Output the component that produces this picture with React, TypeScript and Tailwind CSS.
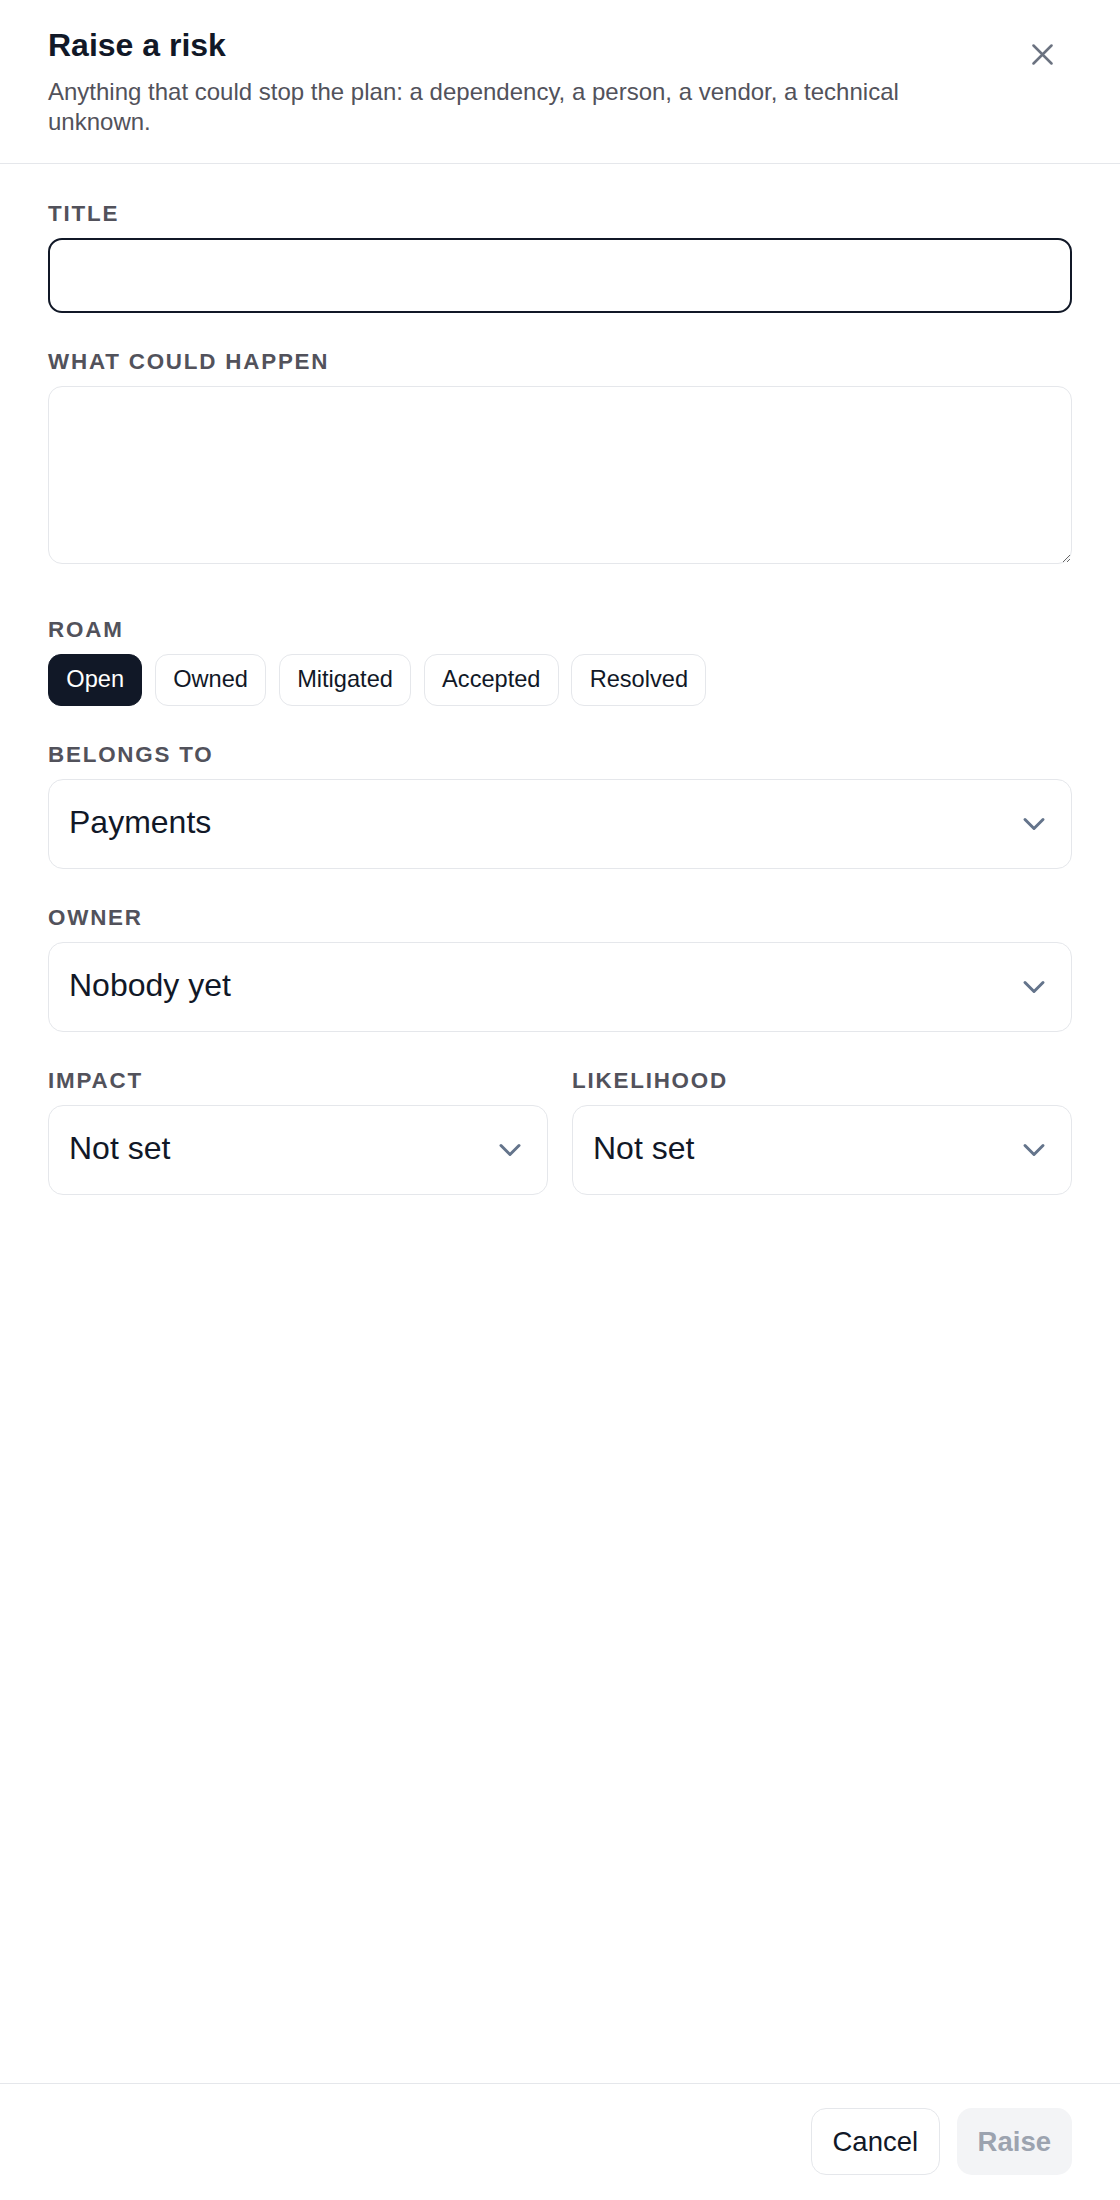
import React from "react";

function Label({ children }: { children: React.ReactNode }) {
  return (
    <div className="mb-[10px] text-[22.4px] font-bold uppercase leading-[28px] tracking-[0.08em] text-[#52525b]">
      {children}
    </div>
  );
}

function Chevron() {
  return (
    <svg width="36" height="36" viewBox="0 0 24 24" fill="none" stroke="#64748b" strokeWidth="2" strokeLinecap="round" strokeLinejoin="round">
      <path d="m6 9 6 6 6-6" />
    </svg>
  );
}

function SelectBox({ value }: { value: string }) {
  return (
    <button
      type="button"
      className="flex h-[90px] w-full items-center justify-between rounded-[15px] border-[1.5px] border-[#e5e7eb] bg-white pl-[20px] pr-[19px] text-left"
    >
      <span className="mb-[5px] text-[32px] leading-[36px] text-[#111827]">{value}</span>
      <Chevron />
    </button>
  );
}

export default function App() {
  const pills = ["Open", "Owned", "Mitigated", "Accepted", "Resolved"];
  return (
    <div className="flex min-h-screen flex-col bg-white" style={{ fontFamily: '"Liberation Sans", Arial, sans-serif' }}>
      <header className="flex items-start justify-between border-b-[1.5px] border-[#e5e7eb] px-12 pb-[26px] pt-[25px]">
        <div className="max-w-[900px]">
          <h1 className="text-[32px] font-bold leading-[40px] text-[#111827]">Raise a risk</h1>
          <p className="mt-[12px] text-[24px] leading-[30px] text-[#52525b]">
            Anything that could stop the plan: a dependency, a person, a vendor, a technical unknown.
          </p>
        </div>
        <button type="button" aria-label="Close" className="mr-[7.5px] mt-[7px] flex h-[44px] w-[44px] items-center justify-center">
          <svg width="21" height="21" viewBox="0 0 21 21" fill="none" stroke="#6b7280" strokeWidth="2.5" strokeLinecap="round">
            <path d="M1.5 1.5 19.5 19.5M19.5 1.5 1.5 19.5" />
          </svg>
        </button>
      </header>

      <main className="flex-1 px-12 pt-[36px]">
        <section>
          <Label>Title</Label>
          <input
            type="text"
            className="block h-[75px] w-full rounded-[14px] border-[2.4px] border-[#111827] bg-white px-5 text-[32px] text-[#111827] outline-none"
          />
        </section>

        <section className="mt-[35px]">
          <Label>What could happen</Label>
          <textarea className="block h-[178px] w-full resize-y rounded-[14px] border-[1.5px] border-[#e5e7eb] bg-white px-5 py-4 text-[24px] text-[#111827] outline-none" />
        </section>

        <section className="mt-[52px]">
          <Label>Roam</Label>
          <div className="flex gap-[12.6px]">
            {pills.map((p, i) => (
              <button
                key={p}
                type="button"
                className={
                  i === 0
                    ? "h-[52px] rounded-[13px] border-[1.5px] border-[#111827] bg-[#111827] px-[17.3px] text-[23.6px] text-white"
                    : "h-[52px] rounded-[13px] border-[1.5px] border-[#e5e7eb] bg-white px-[17.3px] text-[23.6px] text-[#111827]"
                }
              >
                {p}
              </button>
            ))}
          </div>
        </section>

        <section className="mt-[35px]">
          <Label>Belongs to</Label>
          <SelectBox value="Payments" />
        </section>

        <section className="mt-[35px]">
          <Label>Owner</Label>
          <SelectBox value="Nobody yet" />
        </section>

        <section className="mt-[35px] grid grid-cols-2 gap-6">
          <div>
            <Label>Impact</Label>
            <SelectBox value="Not set" />
          </div>
          <div>
            <Label>Likelihood</Label>
            <SelectBox value="Not set" />
          </div>
        </section>
      </main>

      <footer className="flex justify-end gap-[17px] border-t-[1.5px] border-[#e5e7eb] px-12 pb-[25px] pt-[24px]">
        <button type="button" className="h-[67px] rounded-[15px] border-[1.5px] border-[#e5e7eb] bg-white px-[20.5px] text-[27.5px] text-[#111827]">
          Cancel
        </button>
        <button type="button" disabled className="h-[67px] rounded-[15px] border-[1.5px] border-transparent bg-[#f3f4f6] px-[20px] text-[27.5px] font-bold text-[#9ca3af]">
          Raise
        </button>
      </footer>
    </div>
  );
}
